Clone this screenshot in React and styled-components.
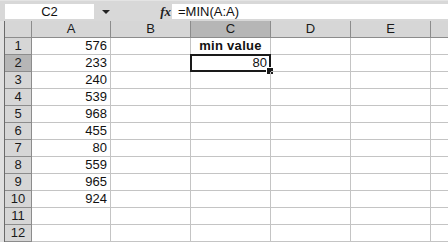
import React from 'react';
import styled, { createGlobalStyle } from 'styled-components';

const Global = createGlobalStyle`
  html, body { margin: 0; padding: 0; background: #d6d6d6; }
  body { font-family: "Liberation Sans", Arial, sans-serif; }
`;

const Sheet = styled.div`
  width: 448px;
  height: 242px;
  overflow: hidden;
  background: #d8d8d8;
  display: flex;
  flex-direction: column;
`;

const FormulaBar = styled.div`
  height: 21px;
  box-sizing: border-box;
  padding: 3px 0 2px 5px;
  display: flex;
  align-items: stretch;
  background: #d8d8d8;
  border-top: 1px solid #e4e4e4;
`;

const NameBox = styled.div`
  width: 89px;
  background: #fff;
  font-size: 13px;
  line-height: 16px;
  text-align: center;
  color: #111;
`;

const DropArrow = styled.div`
  width: 24px;
  display: flex;
  align-items: center;
  justify-content: center;
  &::after {
    content: '';
    border-left: 4px solid transparent;
    border-right: 4px solid transparent;
    border-top: 4px solid #222;
  }
`;

const Fx = styled.div`
  width: 54px;
  text-align: right;
  padding-right: 1px;
  box-sizing: border-box;
  font-family: "Liberation Serif", "Times New Roman", serif;
  font-style: italic;
  font-weight: bold;
  font-size: 13px;
  line-height: 16px;
  color: #222;
`;

const FormulaInput = styled.div`
  flex: 1;
  background: #fff;
  font-size: 13px;
  line-height: 16px;
  padding-left: 6px;
  color: #111;
`;

const Body = styled.div`
  flex: 1;
  display: flex;
`;

const Gutter = styled.div`
  width: 4px;
  background: #e0e0e0;
  border-right: 1px solid #6a6a6a;
`;

const Grid = styled.div`
  display: grid;
  grid-template-columns: 27px 79px 80px 80px 80px 80px 40px;
  grid-auto-rows: 17px;
  background: #fff;
  flex: 1;
  overflow: hidden;
`;

const Head = styled.div`
  box-sizing: border-box;
  background: ${(p) => (p.active ? '#b6b6b6' : '#d6d6d6')};
  border-right: 1px solid #8c8c8c;
  border-bottom: 1px solid #8c8c8c;
  font-size: 13px;
  line-height: 16px;
  text-align: center;
  color: #1a1a1a;
`;

const Cell = styled.div`
  position: relative;
  box-sizing: border-box;
  border-right: 1px solid #c4c4c4;
  border-bottom: 1px solid #c4c4c4;
  font-size: 13px;
  line-height: 16px;
  padding: 0 3px;
  color: #111;
  text-align: ${(p) => (p.num ? 'right' : p.center ? 'center' : 'left')};
  font-weight: ${(p) => (p.bold ? 'bold' : 'normal')};
  letter-spacing: ${(p) => (p.bold ? '0.3px' : '0')};
`;

const Selection = styled.div`
  position: absolute;
  left: -1px;
  top: -1px;
  right: -1px;
  bottom: -1px;
  border: 2px solid #1a1a1a;
  pointer-events: none;
  &::after {
    content: '';
    position: absolute;
    right: -5px;
    bottom: -5px;
    width: 6px;
    height: 6px;
    background: #1a1a1a;
    border: 1px solid #fff;
  }
`;

const colsHead = ['', 'A', 'B', 'C', 'D', 'E', ''];
const values = [576, 233, 240, 539, 968, 455, 80, 559, 965, 924, null, null];

export default function App() {
  return (
    <>
      <Global />
      <Sheet>
        <FormulaBar>
          <NameBox>C2</NameBox>
          <DropArrow />
          <Fx>fx</Fx>
          <FormulaInput>=MIN(A:A)</FormulaInput>
        </FormulaBar>
        <Body>
          <Gutter />
          <Grid>
            {colsHead.map((c, i) => (
              <Head key={'h' + i} active={c === 'C'}>{c}</Head>
            ))}
            {values.map((v, r) => (
              <React.Fragment key={r}>
                <Head active={r === 1}>{r + 1}</Head>
                <Cell num>{v}</Cell>
                <Cell />
                {r === 0 ? (
                  <Cell center bold>min value</Cell>
                ) : r === 1 ? (
                  <Cell num>80<Selection /></Cell>
                ) : (
                  <Cell />
                )}
                <Cell />
                <Cell />
                <Cell />
              </React.Fragment>
            ))}
          </Grid>
        </Body>
      </Sheet>
    </>
  );
}
